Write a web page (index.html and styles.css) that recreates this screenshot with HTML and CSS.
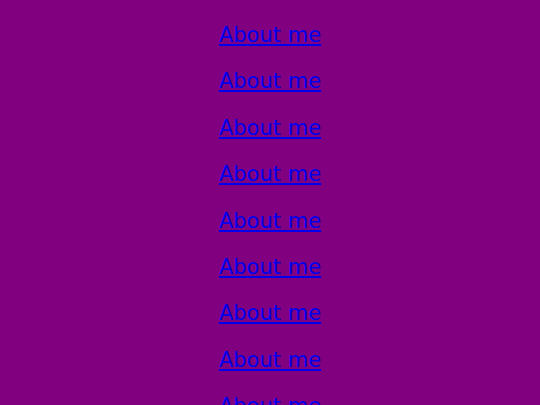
FILE: index.html
```html
<!DOCTYPE html>
<html>
<head>
<meta charset="utf-8">
<link rel="stylesheet" href="styles.css">
</head>
<body>
<ul class="menu">
<li class="item"><a class="link" href="#">About me</a></li>
<li class="item"><a class="link" href="#">About me</a></li>
<li class="item"><a class="link" href="#">About me</a></li>
<li class="item"><a class="link" href="#">About me</a></li>
<li class="item"><a class="link" href="#">About me</a></li>
<li class="item"><a class="link" href="#">About me</a></li>
<li class="item"><a class="link" href="#">About me</a></li>
<li class="item"><a class="link" href="#">About me</a></li>
<li class="item"><a class="link" href="#">About me</a></li>
<li class="item"><a class="link" href="#">About me</a></li>
</ul>
</body>
</html>
```
FILE: styles.css
```css
html, body {
  margin: 0;
  padding: 0;
  background: #800080;
  overflow: hidden;
}
.menu {
  list-style: none;
  margin: 0;
  padding: 12px 0 0;
  display: flex;
  flex-direction: column;
  align-items: center;
}
.item {
  font-family: "DejaVu Sans", sans-serif;
  font-size: 21px;
  line-height: 46.4px;
}
.link {
  color: #0000ee;
  text-decoration: underline;
}
```
